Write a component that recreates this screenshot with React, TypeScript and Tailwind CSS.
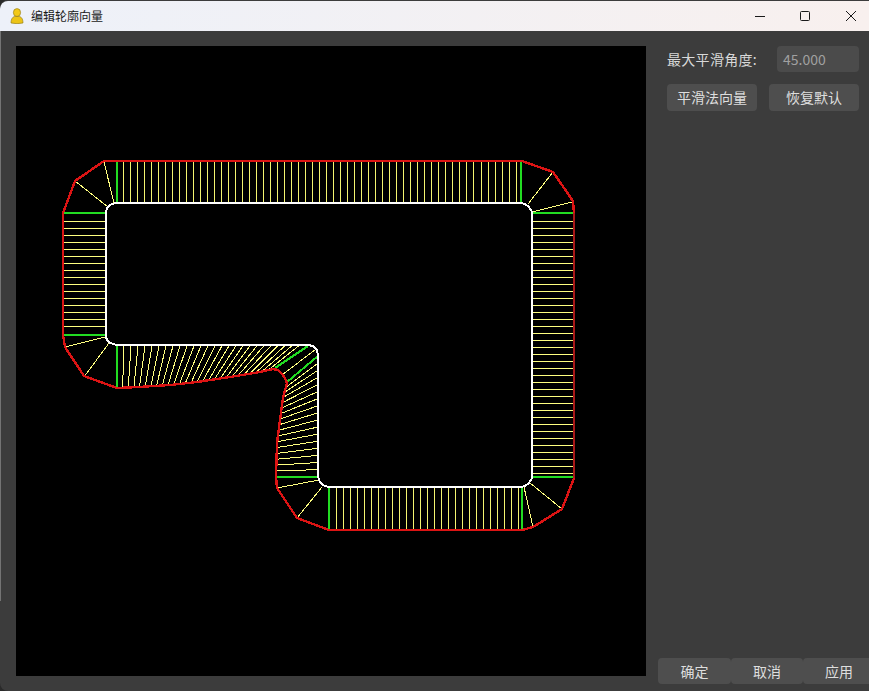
type Pt = [number, number];

const RED = '#dc1414';
const GREEN = '#22dc22';
const YELLOW = '#ffff80';
const YELLOW_V = '#f4f470';

// inner contour of the shape
const inner =
  'M115 203 H521 L525 204 L529 207 L532 212 V478 L529 483 L525 486 L521 487 H328 L323 485 L320 482 L318 477 V356 L317 350 L313 346 L308 345 H117 L110 343 L107 340 L106 337 V212 L107 208 L110 205 Z';

// offset contour
const outer: Pt[] = [
  [522, 161], [553, 172], [573, 201], [574, 213], [574, 478], [562, 509], [533, 527], [522, 530],
  [329, 530], [297, 518], [277, 488], [276, 477], [277, 443], [280, 420], [283, 398], [287, 383],
  [285, 378], [282, 374], [278, 370], [273, 369], [260, 372], [230, 377], [197, 382], [170, 385], [138, 387],
  [117, 388], [84, 376], [65, 347], [63, 335], [63, 213], [75, 181], [104, 161],
];

const fans: [number, number, number, number][] = [
  [104, 162, 114, 203], [75, 181, 108, 207], [553, 172, 528, 204], [572, 202, 532, 212],
  [562, 509, 530, 483], [533, 527, 524, 487], [297, 518, 322, 487], [277, 488, 319, 480],
  [84, 377, 109, 343], [65, 347, 105, 337], [282, 375, 316, 349],
];

const greens: [number, number, number, number][] = [
  [117, 161, 117, 203], [521, 161, 521, 203], [532, 213, 574, 213], [532, 477, 574, 477],
  [522, 487, 522, 530], [329, 487, 329, 530], [277, 477, 318, 477], [64, 213, 106, 213],
  [64, 335, 106, 335], [117, 345, 117, 388], [275, 368, 308, 346], [287, 382, 318, 356],
];

// y of the offset curve under the lower left run
const lowerY = (x: number) => {
  const pts: Pt[] = [[117, 388], [138, 387], [170, 385], [197, 382], [230, 377], [260, 372], [275, 369]];
  for (let i = 1; i < pts.length; i++) {
    if (x <= pts[i][0]) {
      const t = (x - pts[i - 1][0]) / (pts[i][0] - pts[i - 1][0]);
      return pts[i - 1][1] + t * (pts[i][1] - pts[i - 1][1]);
    }
  }
  return 369;
};

// x of the offset curve beside the vertical run
const sideX = (y: number) => {
  const pts: Pt[] = [[383, 287], [398, 283], [420, 280], [443, 277], [477, 276]];
  for (let i = 1; i < pts.length; i++) {
    if (y <= pts[i][0]) {
      const t = (y - pts[i - 1][0]) / (pts[i][0] - pts[i - 1][0]);
      return pts[i - 1][1] + t * (pts[i][1] - pts[i - 1][1]);
    }
  }
  return 276;
};

const range = (from: number, to: number, step: number) => {
  const out: number[] = [];
  for (let v = from; v < to - 2; v += step) out.push(Math.floor(v));
  return out;
};

function Profile() {
  const skewed: [number, number, number, number][] = [];
  // skewed runs around the concave corner
  for (let i = 1; i < 27; i++) {
    const ox = 117 + i * 5.6 + i * i * 0.0076;
    skewed.push([117 + i * 7.03, 345, ox, lowerY(ox)]);
  }
  for (let i = 1; i < 17; i++) {
    const oy = 383 + 94 * Math.pow(i / 17, 1.08);
    skewed.push([318, 356 + i * 7.1, sideX(oy), oy]);
  }

  return (
    <svg viewBox="16 46 630 630" className="block h-[630px] w-[630px] shrink-0 bg-black" shapeRendering="crispEdges">
      {/* straight runs as 1px rects so they stay one pixel wide */}
      {range(123, 521, 7.02).map((x) => (
        <rect key={x} x={x} y={161} width={1} height={42} fill={YELLOW_V} />
      ))}
      {range(336, 522, 7.02).map((x) => (
        <rect key={x} x={x} y={487} width={1} height={43} fill={YELLOW_V} />
      ))}
      {range(221, 477, 7).map((y) => (
        <rect key={y} x={532} y={y} width={42} height={1} fill={YELLOW} />
      ))}
      {range(221, 335, 7).map((y) => (
        <rect key={y} x={64} y={y} width={42} height={1} fill={YELLOW} />
      ))}
      {skewed.concat(fans).map((l, i) => (
        <line key={i} x1={l[0]} y1={l[1]} x2={l[2]} y2={l[3]} stroke={YELLOW} strokeWidth={1} />
      ))}
      {greens.map((l, i) => (
        <line key={i} x1={l[0]} y1={l[1]} x2={l[2]} y2={l[3]} stroke={GREEN} strokeWidth={2} />
      ))}
      <polygon points={outer.map((p) => p.join(',')).join(' ')} fill="none" stroke={RED} strokeWidth={2.4} />
      <line x1={574} y1={213} x2={574} y2={478} stroke="#a81818" strokeWidth={2} />
      <path d={inner} fill="none" stroke="#ffffff" strokeWidth={2} />
    </svg>
  );
}

function AppIcon() {
  return (
    <svg viewBox="0 0 14 16" className="h-4 w-[14px] shrink-0">
      <ellipse cx="7" cy="4.6" rx="3.6" ry="4" fill="#f2c919" stroke="#8a7410" strokeWidth="0.6" />
      <path d="M1 15 C1 10.5 3 8.6 5 8.4 H9 C11 8.6 13 10.5 13 15 Q7 16.4 1 15 Z" fill="#ecc417" stroke="#8a7410" strokeWidth="0.6" />
    </svg>
  );
}

function WindowControls() {
  return (
    <div className="ml-auto mr-[13px] flex items-center gap-[35px]">
      <svg viewBox="0 0 10 10" className="h-[10px] w-[10px]" stroke="#1a1a1a" fill="none">
        <path d="M0 5.5 H10" />
      </svg>
      <svg viewBox="0 0 10 10" className="h-[10px] w-[10px]" stroke="#1a1a1a" fill="none">
        <rect x="0.5" y="0.5" width="9" height="9" rx="1" />
      </svg>
      <svg viewBox="0 0 10 10" className="ml-px h-[10px] w-[10px]" stroke="#1a1a1a" fill="none">
        <path d="M0 0 L10 10 M10 0 L0 10" />
      </svg>
    </div>
  );
}

function PanelButton({ label, className }: { label: string; className: string }) {
  return (
    <button className={`flex shrink-0 items-center justify-center rounded bg-[#4e4e4e] text-[14px] text-[#dedede] ${className}`}>
      {label}
    </button>
  );
}

export default function App() {
  return (
    <div className="h-[691px] w-[869px] overflow-hidden bg-[#2a2a2a]">
      <div className="relative flex h-[691px] w-[869px] flex-col overflow-hidden rounded-l-lg bg-[#3c3c3c] font-['Noto_Sans_CJK_SC','Liberation_Sans',sans-serif]">
        {/* sliver of the window behind, along the left edge */}
        <div className="absolute left-0 top-[31px] h-[570px] w-px bg-[#747474]" />
        <div className="mt-px flex h-[30px] shrink-0 items-center rounded-tl-lg bg-gradient-to-r from-[#edf1f9] to-[#f8f0ee] pl-[10px] text-[#1a1a1a]">
          <AppIcon />
          <span className="ml-[7px] text-[12px]">编辑轮廓向量</span>
          <WindowControls />
        </div>
        <div className="flex min-h-0 flex-1 pl-4 pt-[15px]">
          <Profile />
          <div className="flex h-[638px] w-[223px] shrink-0 flex-col">
            <div className="flex h-[26px] items-center pl-[21px]">
              <span className="w-[110px] text-[14px] tracking-[0.3px] text-[#d8d8d8]">最大平滑角度:</span>
              <div className="flex h-[26px] w-[82px] items-center rounded bg-[#4b4b4b] pl-[6px] text-[14px] text-[#a0a0a0]">45.000</div>
            </div>
            <div className="mt-3 flex gap-3 pl-[21px]">
              <PanelButton label="平滑法向量" className="h-[27px] w-[90px]" />
              <PanelButton label="恢复默认" className="h-[27px] w-[90px]" />
            </div>
            <div className="mt-auto flex pl-3">
              <PanelButton label="确定" className="h-[26px] w-[73px]" />
              <PanelButton label="取消" className="h-[26px] w-[72px]" />
              <PanelButton label="应用" className="h-[26px] w-[72px]" />
            </div>
          </div>
        </div>
      </div>
    </div>
  );
}
